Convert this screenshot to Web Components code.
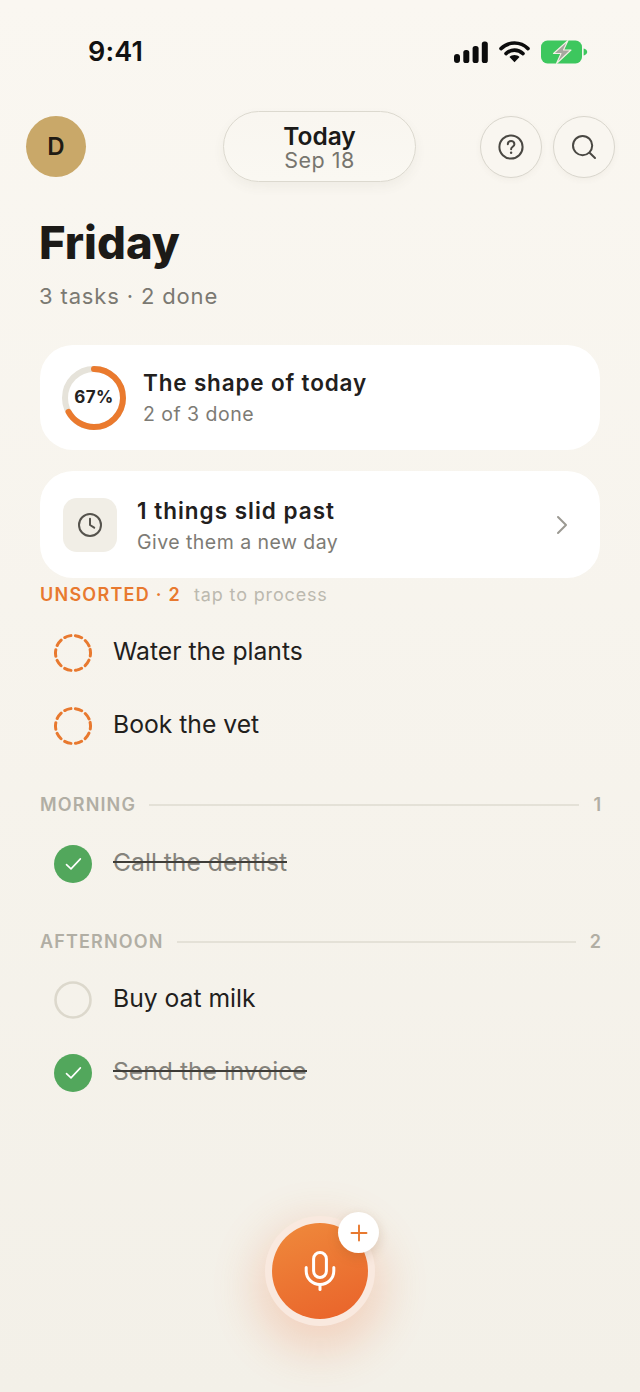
<!doctype html>
<html><head><meta charset="utf-8"><style>
html,body{margin:0;padding:0;background:#f5f1e9}
body{width:640px;height:1392px;overflow:hidden;font-family:Inter,"Liberation Sans",sans-serif}
</style></head><body>
<today-app></today-app>
<script>
const def=(name,css,html)=>{
  customElements.define(name,class extends HTMLElement{
    connectedCallback(){
      if(this.shadowRoot)return;
      const r=this.attachShadow({mode:'open'});
      const attrs=n=>this.getAttribute(n)||'';
      r.innerHTML=`<style>${css}</style>`+(typeof html==='function'?html(attrs):html);
    }
  });
};
const CHECK=`<svg width="38" height="38" viewBox="0 0 38 38"><circle cx="19" cy="19" r="19" fill="#52a75c"/><path d="M12.5 19.6l4.5 4.3 9.4-10" fill="none" stroke="#fff" stroke-width="1.6" stroke-linecap="round" stroke-linejoin="round"/></svg>`;
const DASH=`<svg width="38" height="38" viewBox="0 0 38 38"><circle cx="19" cy="19" r="17.5" fill="none" stroke="#e8792f" stroke-width="3" stroke-dasharray="6.6 4.4" stroke-linecap="round" transform="rotate(-12 19 19)"/></svg>`;
const OPEN=`<svg width="38" height="38" viewBox="0 0 38 38"><circle cx="19" cy="19" r="17.5" fill="none" stroke="#dcd8cc" stroke-width="2.6"/></svg>`;

def('status-bar',`:host{display:flex;height:80px;box-sizing:border-box;padding:0 52px 0 88px;align-items:flex-start;justify-content:space-between;color:#111}
.t{font:600 27px/1 Inter,sans-serif;margin-top:38px;letter-spacing:.2px}
.i{display:flex;align-items:center;gap:11px;margin-top:40px}
svg{display:block}`,`<div class="t">9:41</div><div class="i">
<svg width="34" height="24" viewBox="0 0 34 24"><rect x="0" y="14" width="6" height="9" rx="3" fill="#0c0c0c"/><rect x="9.3" y="10" width="6" height="13" rx="2.6" fill="#0c0c0c"/><rect x="18.6" y="6" width="6" height="17" rx="2.6" fill="#0c0c0c"/><rect x="27.8" y="1.5" width="6" height="21.5" rx="2.6" fill="#0c0c0c"/></svg>
<svg width="31" height="24" viewBox="0 0 31 24"><path d="M2 8.6C9.6 1.2 21.4 1.2 29 8.6M7 13.6c5-4.6 12-4.6 17 0" fill="none" stroke="#0c0c0c" stroke-width="3.6" stroke-linecap="round"/><path d="M15.5 15c2 0 3.6.7 5 1.9l-5 5.3-5-5.3c1.4-1.2 3-1.9 5-1.9z" fill="#0c0c0c"/></svg>
<svg width="47" height="24" viewBox="0 0 47 24"><rect x="0" y="0.5" width="41" height="23" rx="6.5" fill="#3dc75e"/><path d="M42.6 8.5c2.2.6 3.6 1.9 3.6 3.5s-1.4 2.9-3.6 3.5z" fill="#3dc75e"/><path d="M27 0.5L12.5 13.5h7.5L15.5 23.5 30 10h-7.5z" fill="#a6a79f" stroke="#f3f1e6" stroke-width="1.1" stroke-linejoin="round"/></svg>
</div>`);

def('icon-button',`:host{display:flex;width:62px;height:62px;border-radius:50%;box-sizing:border-box;border:1px solid #d9d6cd;background:#f9f6f0;box-shadow:0 2px 6px rgba(90,80,60,.05);align-items:center;justify-content:center}
::slotted(svg){display:block}`,`<slot></slot>`);

def('today-pill',`:host{display:flex;flex-direction:column;align-items:center;justify-content:center;width:193px;height:71px;box-sizing:border-box;border:1px solid #dcd9cf;border-radius:36px;background:linear-gradient(#f9f6f0,#faf8f2);box-shadow:0 5px 12px rgba(90,80,60,.06)}
.a{font:600 24.5px/26px Inter,sans-serif;color:#1b1a18}
.b{font:400 21.5px/22px Inter,sans-serif;color:#77756e;letter-spacing:.5px}`,`<div class="a">Today</div><div class="b">Sep 18</div>`);

def('app-header',`:host{display:flex;align-items:center;box-sizing:border-box;height:71px;margin-top:31px;padding:0 25px 0 26px}
.av{width:60px;height:61px;border-radius:50%;background:#c9a869;display:flex;align-items:center;justify-content:center;font:600 24px/1 Inter,sans-serif;color:#1f1b14}
.c{margin-left:137px}
.r{display:flex;gap:11px;margin-left:64px}`,`<div class="av">D</div><today-pill class="c"></today-pill><div class="r"><icon-button><svg width="26" height="26" viewBox="0 0 26 26" fill="none" stroke="#4a4843" stroke-width="2" stroke-linecap="round" stroke-linejoin="round"><circle cx="13" cy="13" r="11.6"/><path d="M9.8 10.2c0-4.2 6.6-4.2 6.6 0 0 2.6-3.3 2.6-3.3 5"/><path d="M13.1 18.6v.1" stroke-width="2.4"/></svg></icon-button><icon-button><svg width="26" height="26" viewBox="0 0 26 26" fill="none" stroke="#4a4843" stroke-width="2" stroke-linecap="round"><circle cx="11.6" cy="11.6" r="9.6"/><path d="M18.6 18.8l5.4 5.2"/></svg></icon-button></div>`);

def('day-title',`:host{display:block;padding:33px 0 0 39px}
h1{margin:0;font:800 45.4px/56px Inter,sans-serif;color:#1c1a17}
p{margin:11px 0 0;font:400 22px/28px Inter,sans-serif;color:#7b7972;letter-spacing:.85px}`,`<h1>Friday</h1><p>3 tasks · 2 done</p>`);

def('info-card',`:host{display:flex;align-items:center;box-sizing:border-box;margin:0 40px;background:#fff;border-radius:33px}
.t{font:600 22.5px/30px Inter,sans-serif;color:#22201d;letter-spacing:var(--tls,.83px)}
.s{font:400 19.5px/26px Inter,sans-serif;color:#7d7b75;letter-spacing:var(--sls,.47px);margin-top:var(--g,3px)}
.x{flex:1;min-width:0;padding-top:var(--pt,0)}
::slotted(*){flex:none}`,a=>`<slot name="lead"></slot><div class="x"><div class="t">${a('title')}</div><div class="s">${a('sub')}</div></div><slot name="trail"></slot>`);

def('progress-ring',`:host{display:block;width:66px;height:66px;position:relative}
svg{display:block}
span{position:absolute;inset:0;display:flex;align-items:center;justify-content:center;font:700 17px/1 Inter,sans-serif;color:#24221f;letter-spacing:.4px}`,`<svg width="66" height="66" viewBox="0 0 66 66"><circle cx="33" cy="33" r="29" fill="none" stroke="#e6e3da" stroke-width="6"/><circle cx="33" cy="33" r="29" fill="none" stroke="#ea7a2e" stroke-width="6" stroke-linecap="round" stroke-dasharray="122 182.2" transform="rotate(-90 33 33)"/></svg><span>67%</span>`);

def('section-head',`:host{display:flex;align-items:center;padding:0 39px 0 40px;height:24px;color:#b1aea4;font:600 18px/24px Inter,sans-serif;letter-spacing:1.15px}
i{flex:1;height:2px;background:#e4e1d7;margin:0 14px 0 13px}
b{font-weight:600;letter-spacing:0}`,a=>`<span>${a('label')}</span><i></i><b>${a('count')}</b>`);

def('task-row',`:host{display:flex;align-items:center;height:72px;margin-bottom:1px;padding-left:54px;gap:21px;font:400 24.7px/32px Inter,sans-serif;color:#22201c}
svg{display:block;flex:none}
span{margin-bottom:4px}
.d{position:relative;color:#85837c}
.d::after{content:"";position:absolute;left:0;right:0;top:50%;height:2px;background:#3e3c37;margin-top:-1px}`,a=>{
  const s=a('state');
  return (s==='done'?CHECK:s==='open'?OPEN:DASH)+`<span class="${s==='done'?'d':''}">${a('text')}</span>`;
});

def('mic-fab',`:host{display:block;width:110px;height:110px;border-radius:50%;position:relative;background:#f9e9df;box-shadow:0 16px 44px 10px rgba(236,110,50,.22)}
.o{position:absolute;inset:7px;border-radius:50%;background:linear-gradient(160deg,#ef8a3c,#e9622a);display:flex;align-items:center;justify-content:center}
.p{position:absolute;left:73px;top:-4px;width:41px;height:41px;border-radius:50%;background:#fff;box-shadow:0 4px 12px rgba(120,70,30,.18);display:flex;align-items:center;justify-content:center}
svg{display:block}`,`<div class="o"><svg width="34" height="40" viewBox="0 0 34 40" fill="none" stroke="#fff" stroke-width="3" stroke-linecap="round"><rect x="10.6" y="1.5" width="12.8" height="25" rx="6.4"/><path d="M3.2 16.5v3.5c0 7.6 6.2 13.4 13.8 13.4s13.8-5.8 13.8-13.4v-3.5"/><path d="M17 33.5v5"/></svg></div><div class="p"><svg width="18" height="18" viewBox="0 0 18 18" fill="none" stroke="#e8792f" stroke-width="1.9" stroke-linecap="round"><path d="M9 1.5v15M1.5 9h15"/></svg></div>`);

def('today-app',`:host{display:block;width:640px;height:1392px;position:relative;overflow:hidden;background:linear-gradient(#faf7f1,#f3f0e8)}
.c1{height:105px;margin-top:35px !important;padding:0 0 0 21px;gap:16px}
.c2{height:107px;margin-top:21px !important;padding:0 32px 0 23px;gap:20px;--tls:1.0px;--sls:.46px;--pt:2px}
.ico{width:54px;height:54px;border-radius:14px;background:#f1eee6;display:flex;align-items:center;justify-content:center}
.u{display:flex;align-items:center;height:24px;margin-top:5px;padding-left:40px;font:600 18px/24px Inter,sans-serif;color:#e8792f;letter-spacing:1.25px}
.u span{font-weight:400;color:#bcb9af;letter-spacing:.85px;margin-left:13px}
.l1{margin-top:10px}.m{margin-top:31px}.m2{margin-top:11px}.a{margin-top:30px}.a2{margin-top:10px}
mic-fab{position:absolute;left:265px;top:1216px}`,`
<status-bar></status-bar><app-header></app-header><day-title></day-title>
<info-card class="c1" title="The shape of today" sub="2 of 3 done"><progress-ring slot="lead"></progress-ring></info-card>
<info-card class="c2" title="1 things slid past" sub="Give them a new day"><div slot="lead" class="ico"><svg width="26" height="26" viewBox="0 0 26 26" fill="none" stroke="#55534d" stroke-width="2" stroke-linecap="round" stroke-linejoin="round"><circle cx="13" cy="13" r="11"/><path d="M13 6.8V13l4.2 2.6"/></svg></div><svg slot="trail" width="12" height="20" viewBox="0 0 12 20" fill="none" stroke="#9b9992" stroke-width="2" stroke-linecap="round" stroke-linejoin="round"><path d="M2 2l8 8-8 8"/></svg></info-card>
<div class="u">UNSORTED · 2<span>tap to process</span></div>
<task-row class="l1" text="Water the plants" state="todo"></task-row>
<task-row text="Book the vet" state="todo"></task-row>
<section-head class="m" label="MORNING" count="1"></section-head>
<task-row class="m2" text="Call the dentist" state="done"></task-row>
<section-head class="a" label="AFTERNOON" count="2"></section-head>
<task-row class="a2" text="Buy oat milk" state="open"></task-row>
<task-row text="Send the invoice" state="done"></task-row>
<mic-fab></mic-fab>`);
</script></body></html>
